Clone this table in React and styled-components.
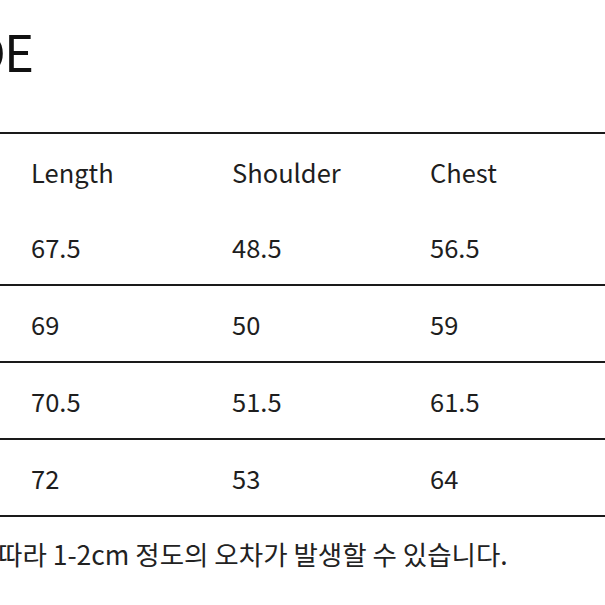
import styled, { createGlobalStyle } from 'styled-components'

const GlobalStyle = createGlobalStyle`
  html, body {
    margin: 0;
    padding: 0;
    background: #fff;
    overflow: hidden;
  }
  body {
    font-family: "Noto Sans CJK KR", "Noto Sans", sans-serif;
    color: #1e1e1e;
  }
`

const Page = styled.div`
  width: 605px;
  height: 605px;
  overflow: hidden;
  display: flex;
  flex-direction: column;
`

const Title = styled.h1`
  margin: 25px 0 0 -268px;
  width: 300px;
  text-align: right;
  white-space: nowrap;
  font-size: 51px;
  letter-spacing: -2px;
  line-height: 1;
  font-weight: 400;
  color: #111;
`

const Table = styled.div`
  margin-top: 56px;
  border-top: 2px solid #1a1a1a;
  display: flex;
  flex-direction: column;
`

const Group = styled.div`
  border-bottom: 2px solid #1a1a1a;
`

const Row = styled.div`
  height: 75px;
  display: grid;
  grid-template-columns: 201px 198px 1fr;
  align-items: center;
  padding-left: 31px;
  font-size: 25.5px;
  line-height: 1;
`

const Cell = styled.span`
  white-space: nowrap;
`

const Note = styled.p`
  margin: 24px 0 0 -2px;
  font-size: 26.5px;
  line-height: 1;
  white-space: nowrap;
  color: #222;
`

const header = ['Length', 'Shoulder', 'Chest']
const rows = [
  ['67.5', '48.5', '56.5'],
  ['69', '50', '59'],
  ['70.5', '51.5', '61.5'],
  ['72', '53', '64'],
]

const SizeRow = ({ cells }) => (
  <Row>
    {cells.map((c, i) => (
      <Cell key={i}>{c}</Cell>
    ))}
  </Row>
)

const App = () => {
  return (
    <Page>
      <GlobalStyle />
      <Title>SIZE GUIDE</Title>
      <Table>
        <Group>
          <SizeRow cells={header} />
          <SizeRow cells={rows[0]} />
        </Group>
        {rows.slice(1).map((r, i) => (
          <Group key={i}>
            <SizeRow cells={r} />
          </Group>
        ))}
      </Table>
      <Note>따라 1-2cm 정도의 오차가 발생할 수 있습니다.</Note>
    </Page>
  )
}

export default App
